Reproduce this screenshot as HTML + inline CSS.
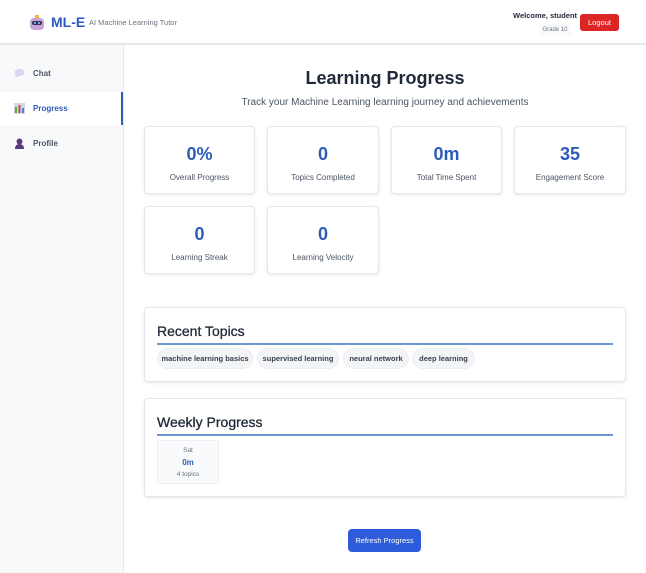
<!DOCTYPE html>
<html><head><meta charset="utf-8"><style>
*{box-sizing:border-box;margin:0;padding:0}
body{width:646px;height:573px;overflow:hidden;font-family:"Liberation Sans",sans-serif;background:#fff;color:#1f2937;position:relative}
.hdr{position:absolute;left:0;top:0;width:646px;height:45px;background:#fff;border-bottom:2px solid #e5e7eb}
.side{position:absolute;left:0;top:45px;width:124px;height:528px;background:#f8f9fb;border-right:1px solid #e5e7eb}
.nav{position:absolute;left:0;width:123px;height:33px;font-size:8px;font-weight:bold;color:#4b5563;display:flex;align-items:center;padding-left:33px}
.nav.act{background:#fff;color:#2d5bb9;border-right:2px solid #2d5bb9}
.ic{position:absolute;left:14px;top:11px;width:11px;height:11px}
.card{position:absolute;background:#fff;border:1px solid #e5e7eb;border-radius:4px;box-shadow:0 1px 3px rgba(0,0,0,.1);text-align:center}
.num{font-size:18px;font-weight:bold;color:#2d5bb9;margin-top:17px}
.lbl{font-size:8px;color:#4b5563;margin-top:8px}
.sec h2{font-size:14px;font-weight:normal;color:#1f2937;position:absolute;left:12px;top:14px;-webkit-text-stroke:0.3px #1f2937}
.line{position:absolute;left:12px;right:12px;height:2px;background:#7096d1}
.chip{position:absolute;top:40px;height:21px;border-radius:11px;background:#f3f4f6;border:1px solid #eceef1;font-size:7.5px;font-weight:bold;color:#374151;line-height:19px;text-align:center;white-space:nowrap}
</style></head><body>
<div class="hdr">
 <svg style="position:absolute;left:29px;top:15px" width="16" height="16" viewBox="0 0 16 16"><rect x="6" y="0" width="4" height="3" fill="#f5b342"/><rect x="1" y="3" width="14" height="12" rx="4" fill="#c7a3d6"/><rect x="3" y="6" width="10" height="4" rx="2" fill="#3a2f5a"/><circle cx="6" cy="8" r="1" fill="#7fd3f7"/><circle cx="10" cy="8" r="1" fill="#7fd3f7"/></svg>
 <div style="position:absolute;left:51px;top:14px;font-size:14px;font-weight:bold;color:#2d5bb9">ML-E</div>
 <div style="position:absolute;left:89px;top:18px;font-size:7.5px;color:#6b7280">AI Machine Learning Tutor</div>
 <div style="position:absolute;left:513px;top:11px;font-size:7.5px;font-weight:bold;color:#1f2937">Welcome, student</div>
 <div style="position:absolute;left:539px;top:24px;width:32px;height:12px;background:#f9fafb;font-size:6px;color:#6b7280;text-align:center;line-height:12px">Grade 10</div>
 <div style="position:absolute;left:580px;top:14px;width:39px;height:17px;background:#dc2626;border-radius:3px;color:#fff;font-size:7.5px;text-align:center;line-height:17px">Logout</div>
</div>
<div class="side">
 <div class="nav" style="top:12px"><svg class="ic" viewBox="0 0 11 11"><ellipse cx="5.5" cy="4.5" rx="5" ry="3.5" fill="#ddd3ee"/><path d="M2 7 L1 10 L5 8z" fill="#ddd3ee"/></svg>Chat</div>
 <div class="nav act" style="top:47px"><svg class="ic" viewBox="0 0 11 11"><rect x="0" y="0" width="11" height="11" fill="#cfd8e3"/><rect x="1" y="4" width="2" height="6" fill="#4caf50"/><rect x="4.5" y="2" width="2" height="8" fill="#e53e3e"/><rect x="8" y="5" width="2" height="5" fill="#3b82f6"/></svg>Progress</div>
 <div class="nav" style="top:82px"><svg class="ic" viewBox="0 0 11 11"><circle cx="5.5" cy="3.5" r="3" fill="#5b3a7a"/><path d="M1 11 Q1 6 5.5 6 Q10 6 10 11z" fill="#5b3a7a"/></svg>Profile</div>
</div>
<div style="position:absolute;left:124px;top:68px;width:522px;text-align:center;font-size:18px;font-weight:bold;color:#1f2937">Learning Progress</div>
<div style="position:absolute;left:124px;top:97px;width:522px;text-align:center;font-size:10px;color:#4b5563">Track your Machine Learning learning journey and achievements</div>

<div class="card" style="left:144px;top:126px;width:111px;height:68px"><div class="num">0%</div><div class="lbl">Overall Progress</div></div>
<div class="card" style="left:267px;top:126px;width:112px;height:68px"><div class="num">0</div><div class="lbl">Topics Completed</div></div>
<div class="card" style="left:391px;top:126px;width:111px;height:68px"><div class="num">0m</div><div class="lbl">Total Time Spent</div></div>
<div class="card" style="left:514px;top:126px;width:112px;height:68px"><div class="num">35</div><div class="lbl">Engagement Score</div></div>
<div class="card" style="left:144px;top:206px;width:111px;height:68px"><div class="num">0</div><div class="lbl">Learning Streak</div></div>
<div class="card" style="left:267px;top:206px;width:112px;height:68px"><div class="num">0</div><div class="lbl">Learning Velocity</div></div>

<div class="card sec" style="left:144px;top:307px;width:482px;height:75px;text-align:left">
 <h2 style="top:15px">Recent Topics</h2><div class="line" style="top:35px"></div>
 <div class="chip" style="left:12px;width:96px">machine learning basics</div>
 <div class="chip" style="left:112px;width:82px">supervised learning</div>
 <div class="chip" style="left:198px;width:66px">neural network</div>
 <div class="chip" style="left:267px;width:63px">deep learning</div>
</div>
<div class="card sec" style="left:144px;top:398px;width:482px;height:99px;text-align:left">
 <h2 style="top:15px">Weekly Progress</h2><div class="line" style="top:35px"></div>
 <div style="position:absolute;left:12px;top:41px;width:62px;height:44px;background:#f9fafb;border:1px solid #eceef1;border-radius:3px;text-align:center">
  <div style="font-size:6.5px;color:#6b7280;margin-top:6px">Sat</div>
  <div style="font-size:8px;font-weight:bold;color:#2d5bb9;margin-top:4px">0m</div>
  <div style="font-size:6.5px;color:#6b7280;margin-top:4px">4 topics</div>
 </div>
</div>
<div style="position:absolute;left:348px;top:529px;width:73px;height:23px;background:#2d5bd9;border-radius:4px;color:#fff;font-size:7.5px;text-align:center;line-height:23px">Refresh Progress</div>
</body></html>
